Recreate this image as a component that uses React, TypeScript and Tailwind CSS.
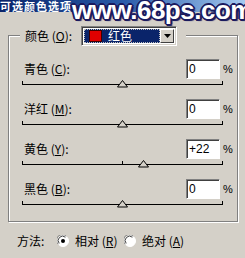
import React from 'react';

const font = "font-['Noto_Sans_CJK_SC','Liberation_Sans',sans-serif]";

const Mnemonic: React.FC<{ name: string; k: string }> = ({ name, k }) => (
    <span className="whitespace-nowrap">
        {name} (<span className="underline underline-offset-1">{k}</span>)
    </span>
);

const Thumb: React.FC<{ left: string }> = ({ left }) => (
    <svg className={`absolute top-[1px] ${left}`} width="11" height="8" viewBox="0 0 11 8">
        <polygon points="5.5,0.5 0.5,7 10.5,7" fill="#d4d0c8" stroke="#000" strokeWidth="1" />
    </svg>
);

const SliderRow: React.FC<{ name: string; k: string; value: string; thumb: string }> = ({ name, k, value, thumb }) => (
    <div className="flex flex-col">
        <div className="flex items-center h-[20px] pl-[15px]">
            <div className="w-[162px] text-[12px] leading-none">
                <Mnemonic name={name} k={k} />:
            </div>
            <div className="w-[34px] h-[20px] bg-white border-t border-l border-[#808080] border-r border-b border-r-white border-b-white shadow-[inset_1px_1px_0_#404040] flex items-center pl-[2px] text-[12px] leading-none font-['Liberation_Sans',sans-serif]">
                {value}
            </div>
            <span className="ml-[3px] text-[11px] leading-none font-['Liberation_Sans',sans-serif]">%</span>
        </div>
        <div className="relative ml-[13px] w-[201px] h-[20px]">
            <div className="absolute left-0 right-0 top-[5px] h-px bg-black" />
            <div className="absolute left-0 top-[2px] w-px h-[3px] bg-black" />
            <div className="absolute left-[100px] top-[2px] w-px h-[3px] bg-black" />
            <div className="absolute right-0 top-[2px] w-px h-[3px] bg-black" />
            <Thumb left={thumb} />
        </div>
    </div>
);

const Radio: React.FC<{ checked?: boolean }> = ({ checked }) => (
    <svg width="12" height="12" viewBox="0 0 12 12">
        <circle cx="6" cy="6" r="5.5" fill="#fff" stroke="#fff" />
        <path d="M1.2 9.2 A5.5 5.5 0 0 1 9.2 1.2" fill="none" stroke="#808080" strokeWidth="1" />
        <path d="M2.2 8.4 A4.4 4.4 0 0 1 8.4 2.2" fill="none" stroke="#404040" strokeWidth="1" />
        {checked && <circle cx="6" cy="6" r="2" fill="#000" />}
    </svg>
);

export default function App() {
    return (
        <div className={`relative w-[245px] h-[258px] bg-[#d4d0c8] overflow-hidden text-black ${font}`}>
            <div className="h-[12px] bg-gradient-to-r from-[#0a246a] via-[#2a5aa8] to-[#a6caf0] flex items-center">
                <span className="text-white font-bold text-[11px] leading-[12px] tracking-[1px]">可选颜色选项</span>
            </div>

            <div className="absolute left-[72px] top-0 text-white font-bold text-[26px] leading-[20px] tracking-[-0.5px] font-['Liberation_Sans',sans-serif] [text-shadow:2px_0_0_#1a1a5e,-2px_0_0_#1a1a5e,0_2px_0_#1a1a5e,0_-2px_0_#1a1a5e,1px_1px_0_#1a1a5e,-1px_-1px_0_#1a1a5e,1px_-1px_0_#1a1a5e,-1px_1px_0_#1a1a5e,2px_2px_1px_#1a1a5e]">
                www.68ps.com
            </div>

            <div className="mt-[23px] ml-[8px] w-[230px] h-[187px] border border-[#808080] shadow-[1px_1px_0_#fff,inset_1px_1px_0_#fff]">
                <div className="-mt-[10px] ml-[11px] w-[166px] h-[20px] bg-[#d4d0c8] flex items-center pl-[5px]">
                    <div className="w-[56px] text-[12px] leading-none">
                        <Mnemonic name="颜色" k="O" />:
                    </div>
                    <div className="w-[96px] h-[20px] bg-white border border-t-[#808080] border-l-[#808080] border-r-white border-b-white shadow-[inset_1px_1px_0_#404040,inset_-1px_-1px_0_#d4d0c8] flex items-center p-[2px]">
                        <div className="flex-1 h-full bg-[#0a246a] outline outline-1 outline-dotted outline-[#c0c0c0] -outline-offset-1 flex items-center pl-[5px]">
                            <div className="w-[13px] h-[12px] bg-[#e00000] border border-[#400000]" />
                            <span className="ml-[6px] text-white text-[12px] leading-none">红色</span>
                        </div>
                        <div className="w-[14px] h-full bg-[#d4d0c8] border border-t-white border-l-white border-r-[#404040] border-b-[#404040] flex items-center justify-center">
                            <svg width="7" height="4" viewBox="0 0 7 4"><polygon points="0,0 7,0 3.5,4" fill="#000" /></svg>
                        </div>
                    </div>
                </div>

                <div className="mt-[13px] flex flex-col">
                    <SliderRow name="青色" k="C" value="0" thumb="left-[95px]" />
                    <SliderRow name="洋红" k="M" value="0" thumb="left-[95px]" />
                    <SliderRow name="黄色" k="Y" value="+22" thumb="left-[116px]" />
                    <SliderRow name="黑色" k="B" value="0" thumb="left-[95px]" />
                </div>
            </div>

            <div className="mt-[11px] flex items-center h-[16px] pl-[17px] text-[12px] leading-none">
                <span className="w-[40px]">方法:</span>
                <Radio checked />
                <span className="ml-[6px] w-[49px]"><Mnemonic name="相对" k="R" /></span>
                <Radio />
                <span className="ml-[6px]"><Mnemonic name="绝对" k="A" /></span>
            </div>
        </div>
    );
}
